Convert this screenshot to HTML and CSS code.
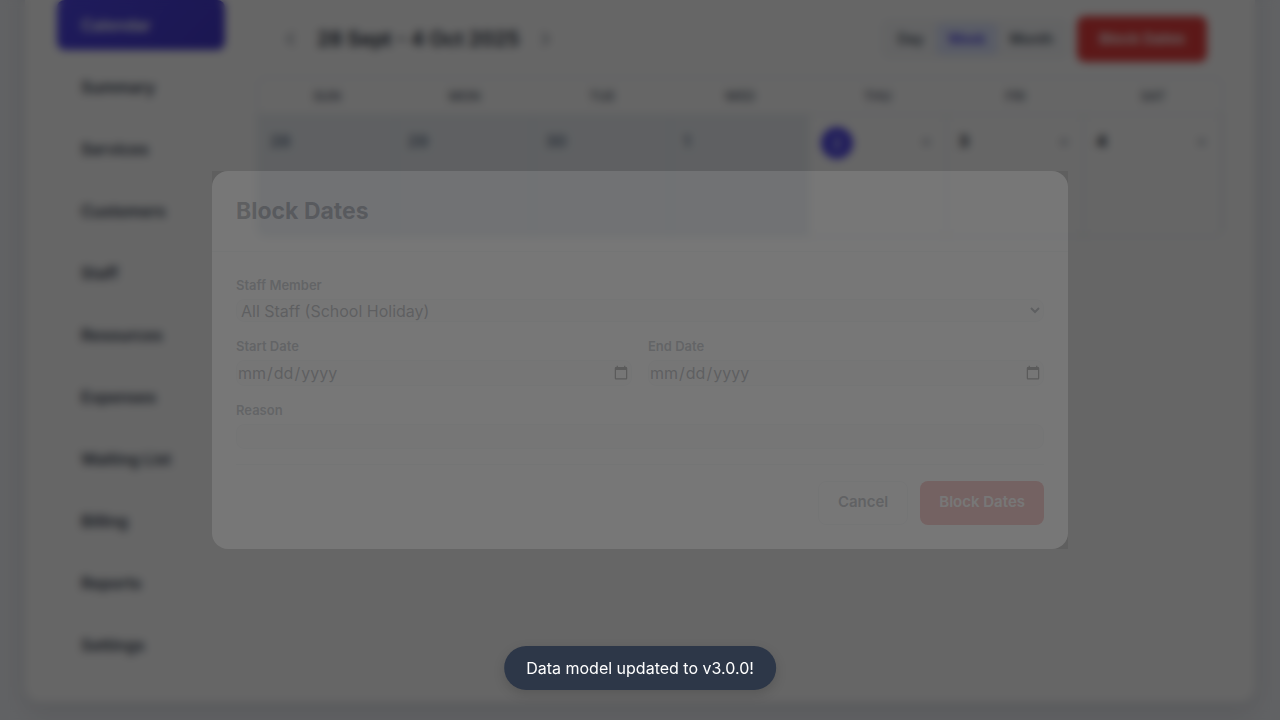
FILE: index.html
```html
<!DOCTYPE html>
<html lang="en">
<head>
<meta charset="utf-8">
<title>Booking Calendar</title>
<link rel="stylesheet" href="styles.css">
</head>
<body>
<div class="app">
  <nav class="sidebar">
    <button class="tab tab-active">Calendar</button>
    <button class="tab">Summary</button>
    <button class="tab">Services</button>
    <button class="tab">Customers</button>
    <button class="tab">Staff</button>
    <button class="tab">Resources</button>
    <button class="tab">Expenses</button>
    <button class="tab">Waiting List</button>
    <button class="tab">Billing</button>
    <button class="tab">Reports</button>
    <button class="tab">Settings</button>
  </nav>
  <main class="content">
    <header class="toolbar">
      <div class="period">
        <button class="arrow" aria-label="Previous"><svg width="20" height="20" viewBox="0 0 24 24"><path d="M15 19l-7-7 7-7"/></svg></button>
        <h2 class="range">28 Sept - 4 Oct 2025</h2>
        <button class="arrow" aria-label="Next"><svg width="20" height="20" viewBox="0 0 24 24"><path d="M9 5l7 7-7 7"/></svg></button>
      </div>
      <div class="actions">
        <div class="views">
          <button class="view">Day</button>
          <button class="view view-active">Week</button>
          <button class="view">Month</button>
        </div>
        <button class="btn btn-danger btn-top">Block Dates</button>
      </div>
    </header>
    <div class="week">
      <div class="weekday">Sun</div>
      <div class="weekday">Mon</div>
      <div class="weekday">Tue</div>
      <div class="weekday">Wed</div>
      <div class="weekday">Thu</div>
      <div class="weekday">Fri</div>
      <div class="weekday">Sat</div>
      <div class="day day-past"><span>28</span></div>
      <div class="day day-past"><span>29</span></div>
      <div class="day day-past"><span>30</span></div>
      <div class="day day-past"><span>1</span></div>
      <div class="day"><span class="today">2</span><button class="add" aria-label="Add booking">+</button></div>
      <div class="day"><span>3</span><button class="add" aria-label="Add booking">+</button></div>
      <div class="day"><span>4</span><button class="add" aria-label="Add booking">+</button></div>
    </div>
  </main>
</div>

<div class="overlay">
  <div class="modal" role="dialog" aria-labelledby="modal-title">
    <div class="modal-header"><h3 class="modal-title" id="modal-title">Block Dates</h3></div>
    <form class="form">
      <div class="field">
        <label for="staff">Staff Member</label>
        <select class="control control-select" id="staff"><option>All Staff (School Holiday)</option></select>
      </div>
      <div class="field-row">
        <div class="field">
          <label for="start">Start Date</label>
          <input class="control" id="start" type="date">
        </div>
        <div class="field">
          <label for="end">End Date</label>
          <input class="control" id="end" type="date">
        </div>
      </div>
      <div class="field">
        <label for="reason">Reason</label>
        <input class="control control-text" id="reason" type="text">
      </div>
      <div class="form-actions">
        <button class="btn btn-plain" type="button">Cancel</button>
        <button class="btn btn-danger" type="button">Block Dates</button>
      </div>
    </form>
  </div>
</div>
<div class="toast" role="status">Data model updated to v3.0.0!</div>
</body>
</html>
```
FILE: styles.css
```css
* { box-sizing: border-box; }
html { height: 100%; overflow: hidden; }
body {
  margin: 0;
  height: 100%;
  overflow: hidden;
  background: #f3f5fa;
  color: #1f2937;
  font: 16px/24px Inter, "Liberation Sans", sans-serif;
}
h2, h3 { margin: 0; }
button, input, select { font: inherit; color: inherit; }
button { border: 0; background: none; padding: 0; }

.app {
  display: flex;
  gap: 32px;
  margin: -33px 24px 0;
  padding: 32px;
  background: #fff;
  border: 1px solid #e5e7eb;
  border-radius: 16px;
  box-shadow: 0 8px 24px rgba(0, 0, 0, .1);
}
.sidebar {
  display: flex;
  flex-direction: column;
  gap: 12px;
  width: 168px;
  flex: none;
}
.tab {
  padding: 13px 24px;
  border-radius: 8px;
  font-weight: 600;
  text-align: left;
  color: #374151;
}
.tab-active {
  background: linear-gradient(135deg, #4f46e5, #4338ca);
  color: #fff;
}
.content { flex: 1; min-width: 0; }
.toolbar {
  display: flex;
  justify-content: space-between;
  align-items: center;
  height: 77px;
  padding: 0 16px 0 24px;
}
.period { display: flex; align-items: center; gap: 16px; }
.actions { display: flex; align-items: center; gap: 8px; }
.arrow { display: flex; }
.arrow svg { fill: none; stroke: #6b7280; stroke-width: 2; }
.range { font-size: 20px; line-height: 28px; font-weight: 600; }
.views {
  display: flex;
  padding: 4px;
  border-radius: 8px;
  background: #f7f8fa;
}
.view {
  padding: 4px 12px;
  border-radius: 6px;
  font-size: 14px;
  font-weight: 600;
  color: #4b5563;
}
.view-active { background: #e0e7ff; color: #4f46e5; }
.week {
  display: grid;
  grid-template-columns: repeat(7, 1fr);
  border: 1px solid #e2e8f0;
  border-radius: 8px;
  overflow: hidden;
}
.weekday {
  padding: 6px 0;
  text-align: center;
  text-transform: uppercase;
  font-size: 13px;
  font-weight: 600;
  color: #6b7280;
}
.day {
  display: flex;
  justify-content: space-between;
  align-items: flex-start;
  height: 122px;
  padding: 12px 14px 12px 12px;
  border-top: 1px solid #e2e8f0;
  border-right: 1px solid #e2e8f0;
  font-weight: 700;
  line-height: 28px;
}
.day-past { background: #edf1f5; color: #718096; }
.today {
  width: 32px;
  height: 32px;
  border-radius: 16px;
  background: #4f46e5;
  color: #c7c9f5;
  line-height: 32px;
  text-align: center;
}
.add { color: #9ca3af; }

.btn {
  padding: 12px 19px 14px;
  border-radius: 8px;
  font-size: 15px;
  line-height: 18px;
  font-weight: 600;
}
.btn-danger { background: #e53e3e; color: #fff; }
.btn-top { padding: 14px 22px; }
.btn-plain { border: 1px solid #e5e7eb; padding: 11px 19px 13px; color: #374151; }

.overlay {
  position: fixed;
  inset: 0;
  display: flex;
  align-items: center;
  justify-content: center;
  background: rgba(0, 0, 0, .6);
  backdrop-filter: blur(4px);
}
.modal {
  width: 67%;
  max-width: 856px;
  background: #fff;
  border-radius: 16px;
  opacity: .11;
}
.modal-header { padding: 24px; border-bottom: 1px solid #e5e7eb; }
.modal-title { font-size: 23px; line-height: 32px; font-weight: 700; }
.form {
  display: flex;
  flex-direction: column;
  gap: 15px;
  padding: 24px;
}
.field {
  display: flex;
  flex-direction: column;
  gap: 4px;
  flex: 1;
}
.field-row { display: flex; gap: 16px; }
.field label { font-size: 13px; line-height: 19px; font-weight: 600; color: #4a5568; }
.control {
  width: 100%;
  height: 26px;
  padding: 0;
  border: 1px solid #e5e7eb;
  border-radius: 8px;
  background: #f3f4f6;
}
.control-select { height: 23px; }
.control-text { height: 25px; }
.form-actions {
  display: flex;
  justify-content: flex-end;
  gap: 12px;
  padding-top: 16px;
  border-top: 1px solid #e5e7eb;
}
.toast {
  position: fixed;
  left: 50%;
  bottom: 30px;
  transform: translateX(-50%);
  padding: 10px 22px;
  border-radius: 22px;
  background: #2d3748;
  color: #fff;
  white-space: nowrap;
  box-shadow: 0 4px 12px rgba(0, 0, 0, .15);
}
```
